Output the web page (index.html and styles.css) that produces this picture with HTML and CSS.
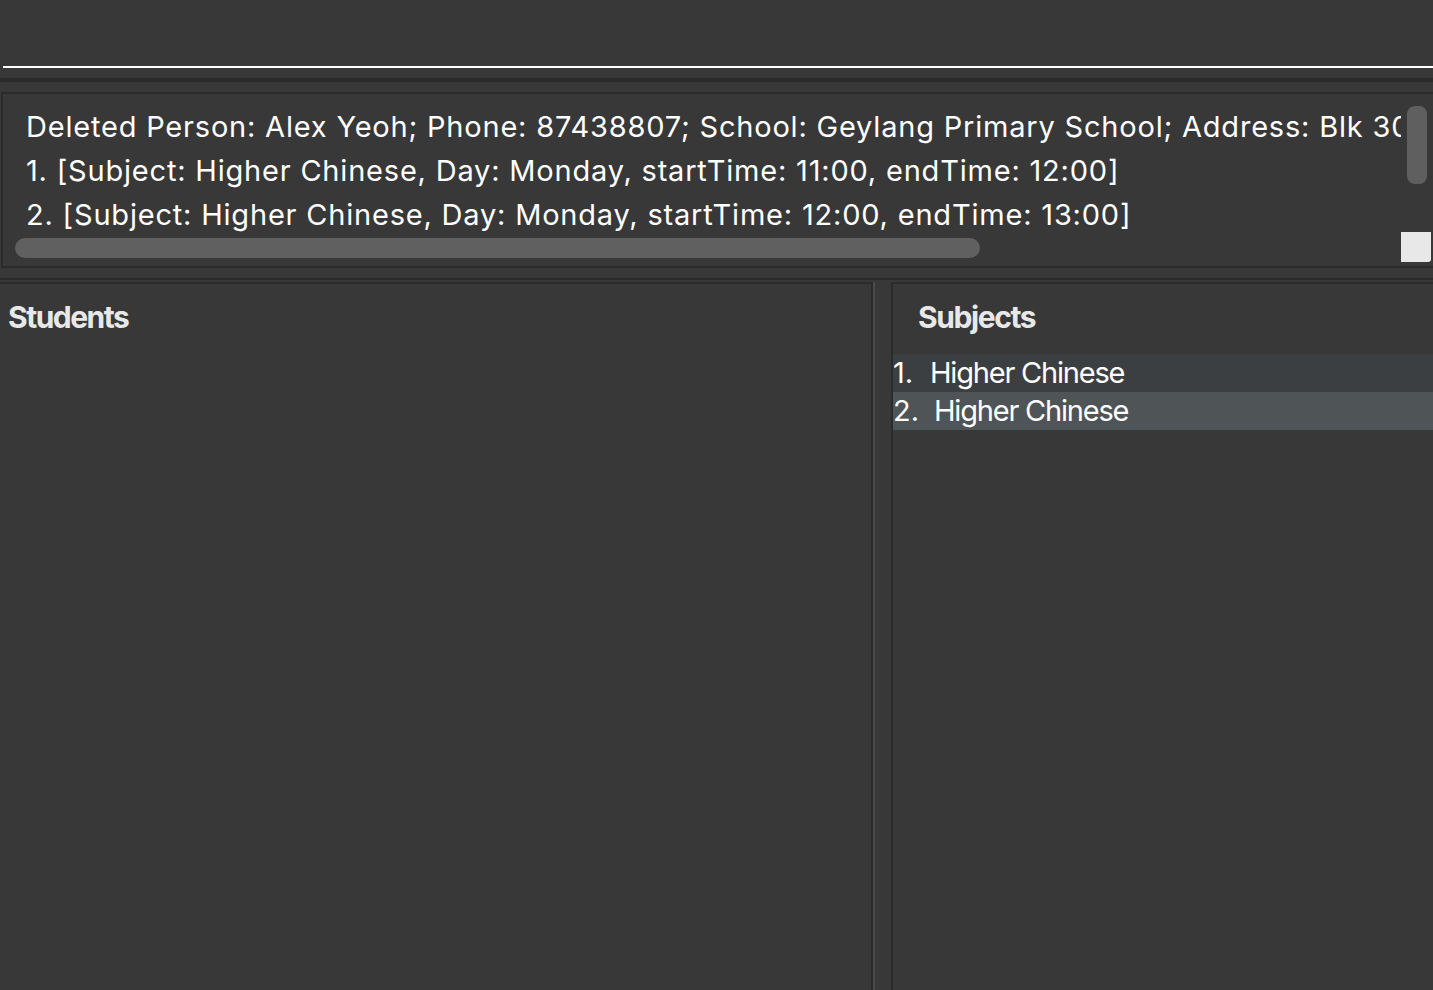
FILE: index.html
```html
<!DOCTYPE html>
<html>
<head>
<meta charset="utf-8">
<link rel="stylesheet" href="styles.css">
</head>
<body>
<div class="app">
  <div class="command"><div class="cmd-field"></div></div>
  <div class="band"></div>
  <div class="result">
    <div class="result-text">Deleted Person: Alex Yeoh; Phone: 87438807; School: Geylang Primary School; Address: Blk 30 Geylang Street 29, #06-40
1. [Subject: Higher Chinese, Day: Monday, startTime: 11:00, endTime: 12:00]
2. [Subject: Higher Chinese, Day: Monday, startTime: 12:00, endTime: 13:00]</div>
    <div class="vscroll"><div class="vthumb"></div></div>
    <div class="hscroll"><div class="hthumb"></div></div>
    <div class="corner"></div>
  </div>
  <div class="line"></div>
  <div class="panes">
    <div class="pane pane-left">
      <div class="pane-title">Students</div>
    </div>
    <div class="divider"></div>
    <div class="pane pane-right">
      <div class="pane-title subjects-title">Subjects</div>
      <div class="list">
        <div class="row"><span class="num">1.</span><span class="name">Higher Chinese</span></div>
        <div class="row selected"><span class="num">2.</span><span class="name name2">Higher Chinese</span></div>
      </div>
    </div>
  </div>
</div>
</body>
</html>
```

FILE: styles.css
```css
html, body {
  margin: 0;
  padding: 0;
  background: #383838;
}
body {
  width: 1433px;
  height: 990px;
  overflow: hidden;
  font-family: Inter, "Noto Sans", sans-serif;
  color: #ffffff;
}
.app {
  display: flex;
  flex-direction: column;
  height: 990px;
}
.command {
  padding-left: 3px;
}
.cmd-field {
  height: 66px;
  border-bottom: 2px solid #ffffff;
}
.band {
  height: 4px;
  margin: 10px 0;
  background: #2b2b2b;
}
.result {
  margin-left: 1px;
  border: 2px solid #2b2b2b;
  border-right: none;
  display: grid;
  grid-template-columns: 1398px 30px;
  grid-template-rows: 138px 30px;
  padding-bottom: 4px;
}
.result-text {
  overflow: hidden;
  white-space: pre;
  font-size: 29px;
  line-height: 44px;
  letter-spacing: 0.8px;
  padding: 11px 0 0 23px;
}
.vscroll {
  padding: 12px 0 0 6px;
}
.vthumb {
  width: 20px;
  height: 78px;
  border-radius: 8px;
  background: #5f5f5f;
}
.hscroll {
  padding: 6px 0 0 12px;
}
.hthumb {
  width: 965px;
  height: 20px;
  border-radius: 10px;
  background: #606060;
}
.corner {
  background: #e8e8e8;
  border-bottom-right-radius: 3px;
}
.line {
  height: 2px;
  margin: 10px 0 2px;
  background: #2b2b2b;
}
.panes {
  flex: 1;
  display: flex;
}
.pane {
  border-top: 2px solid #2b2b2b;
}
.pane-left {
  width: 871px;
  border-right: 2px solid #2b2b2b;
}
.divider {
  width: 16px;
  border-left: 2px solid #4a4a4a;
}
.pane-right {
  flex: 1;
  border-left: 2px solid #2b2b2b;
}
.pane-title {
  font-size: 30px;
  font-weight: 700;
  line-height: 36px;
  letter-spacing: -1.5px;
  color: #e8e8e8;
  padding: 15px 0 0 8px;
}
.subjects-title {
  padding-left: 25px;
  letter-spacing: -1.4px;
}
.list {
  margin-top: 19px;
}
.row {
  height: 38px;
  line-height: 38px;
  font-size: 29px;
  letter-spacing: -1.2px;
  background: #3c3f41;
  display: flex;
  white-space: pre;
}
.row.selected {
  background: #4f5456;
}
.num {
  width: 37px;
  letter-spacing: 0;
}
.name2 {
  margin-left: 4px;
}
```
